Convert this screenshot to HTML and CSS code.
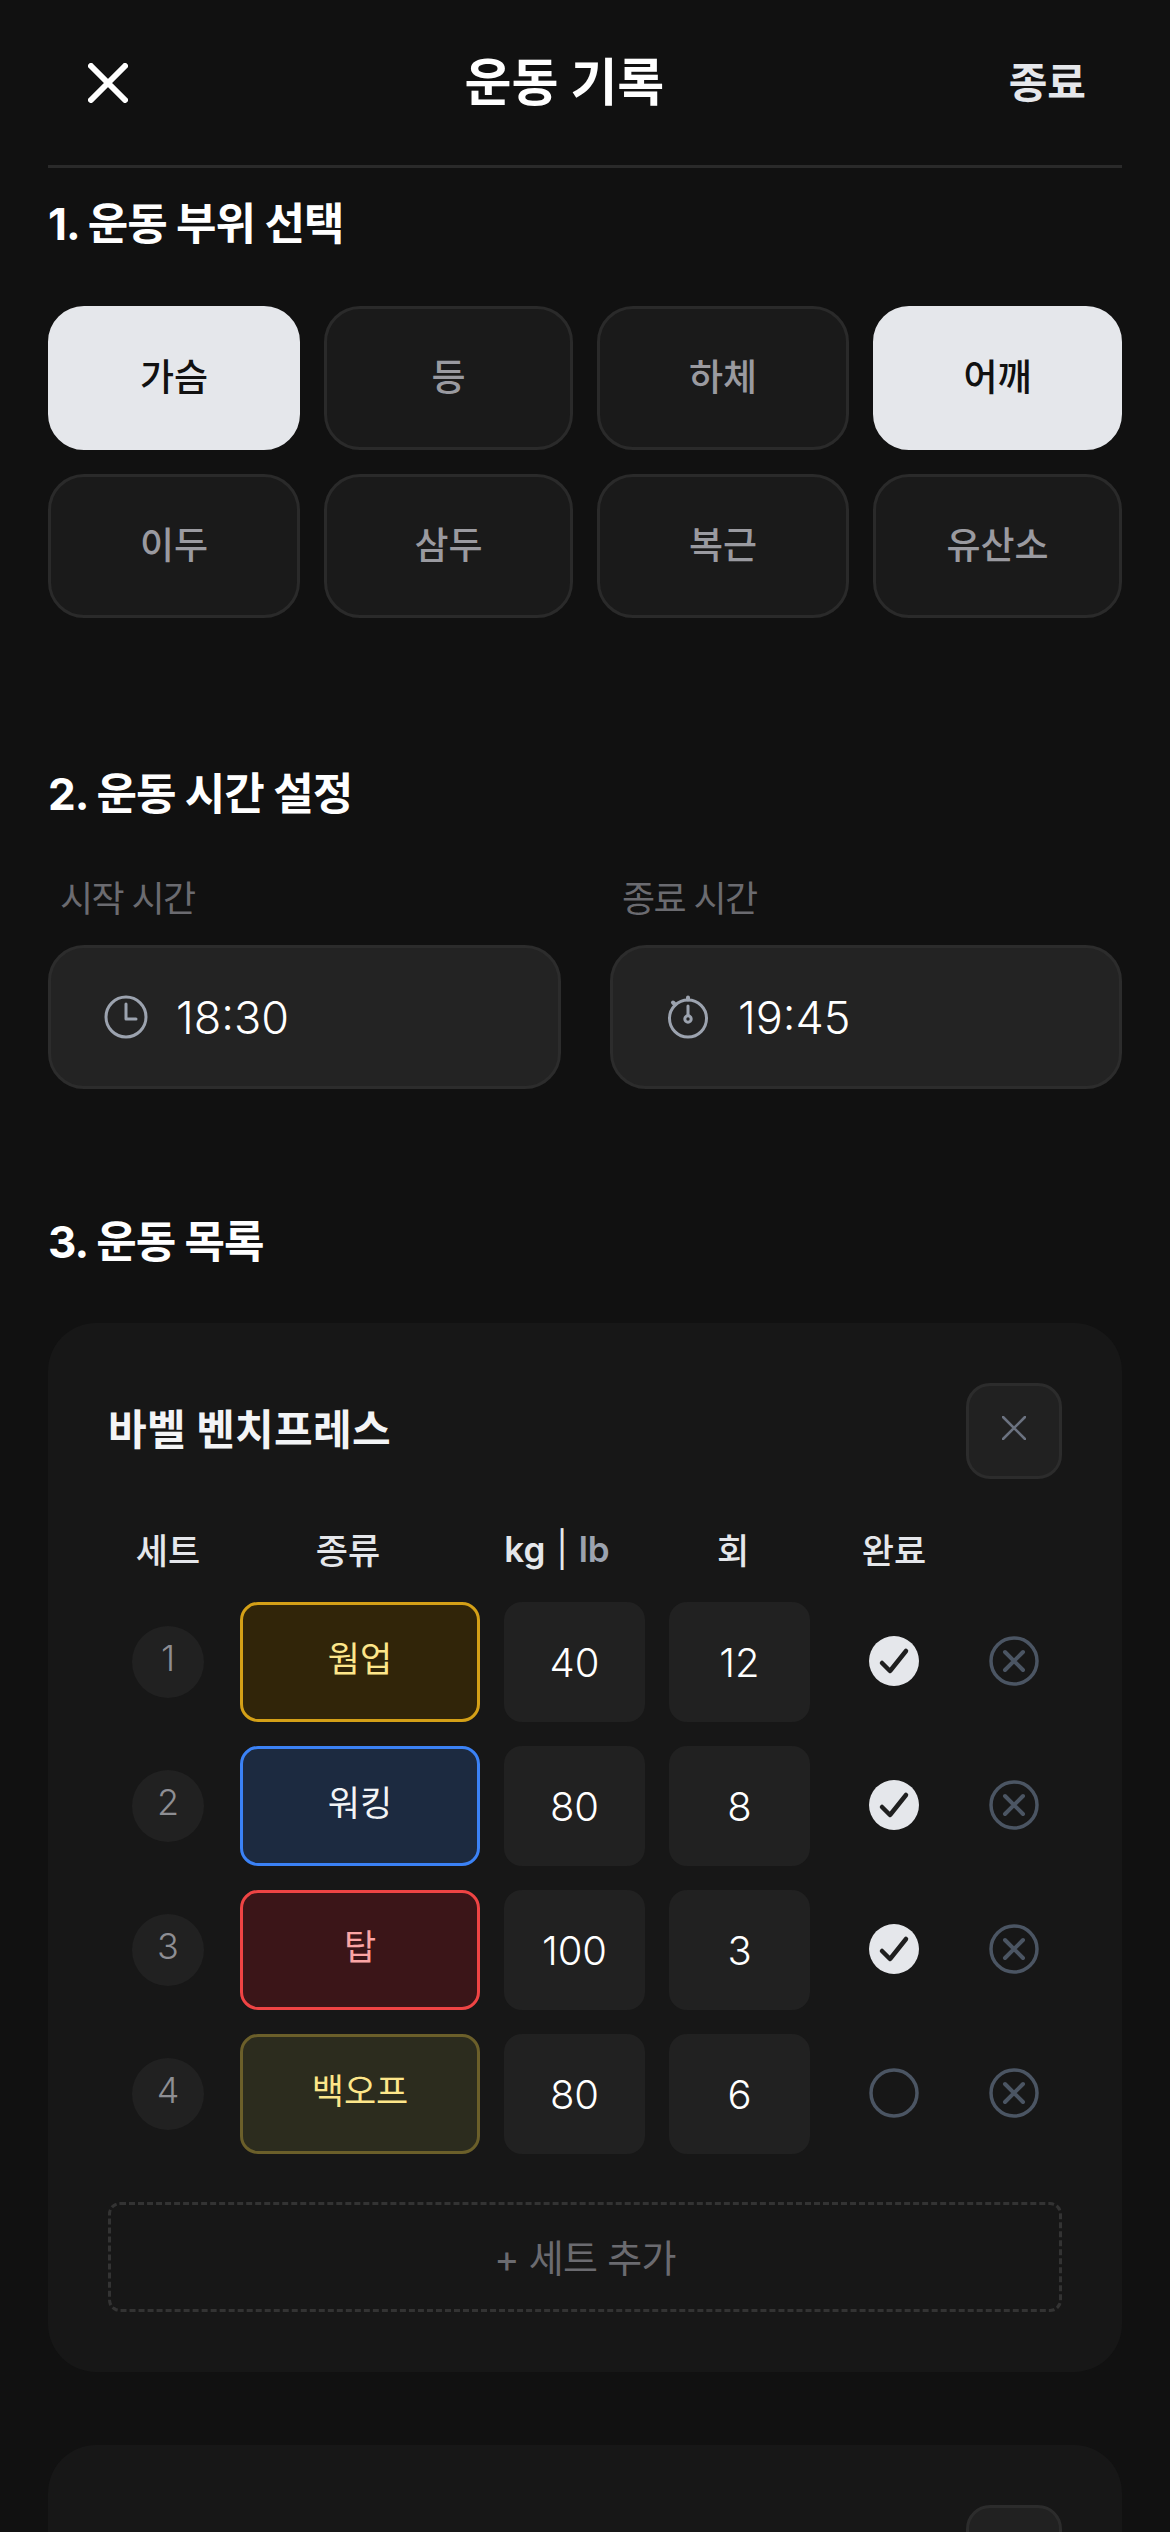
FILE: index.html
```html
<!DOCTYPE html>
<html lang="ko">
<head>
  <meta charset="utf-8">
  <title>운동 기록</title>
  <link rel="stylesheet" href="styles.css">
</head>
<body>
  <header class="topbar">
    <button class="close-btn" aria-label="닫기">
      <svg viewBox="0 0 40 40" width="40" height="40"><path d="M3 3L37 37M37 3L3 37" class="close-line"/></svg>
    </button>
    <h1>운동 기록</h1>
    <button class="finish-btn">종료</button>
  </header>

  <main>
    <h2 class="first">1. 운동 부위 선택</h2>
    <div class="chips">
      <div class="chip active">가슴</div>
      <div class="chip">등</div>
      <div class="chip">하체</div>
      <div class="chip active">어깨</div>
      <div class="chip">이두</div>
      <div class="chip">삼두</div>
      <div class="chip">복근</div>
      <div class="chip">유산소</div>
    </div>

    <h2 class="second">2. 운동 시간 설정</h2>
    <div class="times">
      <div class="time-col">
        <label>시작 시간</label>
        <div class="time-box">
          <svg class="time-icon" viewBox="0 0 48 48" width="48" height="48">
            <circle cx="24" cy="24" r="20"/>
            <path d="M24 11V26H34"/>
          </svg>
          <span>18:30</span>
        </div>
      </div>
      <div class="time-col">
        <label>종료 시간</label>
        <div class="time-box">
          <svg class="time-icon" viewBox="0 0 48 48" width="48" height="48">
            <circle cx="24" cy="25.5" r="18.5"/>
            <circle cx="24" cy="26" r="3.2"/>
            <path d="M24 13V22"/>
            <path class="knob" d="M24 4.5V6.5M9 9.5L11 11.5"/>
          </svg>
          <span>19:45</span>
        </div>
      </div>
    </div>

    <h2 class="third">3. 운동 목록</h2>
    <section class="card">
      <div class="card-head">
        <h3>바벨 벤치프레스</h3>
        <button class="remove-btn" aria-label="삭제">
          <svg viewBox="0 0 24 24" width="24" height="24"><path d="M1 1L23 23M23 1L1 23"/></svg>
        </button>
      </div>

      <div class="set-head">
        <span>세트</span>
        <span>종류</span>
        <span class="unit">kg <i>|</i> <b>lb</b></span>
        <span>회</span>
        <span>완료</span>
      </div>

      <div class="set-row">
        <div class="set-num">1</div>
        <div class="set-type warmup">웜업</div>
        <div class="set-val">40</div>
        <div class="set-val">12</div>
        <div class="icon-cell"><svg class="done" viewBox="0 0 50 50" width="50" height="50"><circle cx="25" cy="25" r="25"/><path d="M13 27L21 35L37 15"/></svg></div>
        <div class="icon-cell"><svg class="del" viewBox="0 0 50 50" width="50" height="50"><circle cx="25" cy="25" r="23"/><path d="M16 16L34 34M34 16L16 34"/></svg></div>
      </div>
      <div class="set-row">
        <div class="set-num">2</div>
        <div class="set-type walking">워킹</div>
        <div class="set-val">80</div>
        <div class="set-val">8</div>
        <div class="icon-cell"><svg class="done" viewBox="0 0 50 50" width="50" height="50"><circle cx="25" cy="25" r="25"/><path d="M13 27L21 35L37 15"/></svg></div>
        <div class="icon-cell"><svg class="del" viewBox="0 0 50 50" width="50" height="50"><circle cx="25" cy="25" r="23"/><path d="M16 16L34 34M34 16L16 34"/></svg></div>
      </div>
      <div class="set-row">
        <div class="set-num">3</div>
        <div class="set-type top">탑</div>
        <div class="set-val">100</div>
        <div class="set-val">3</div>
        <div class="icon-cell"><svg class="done" viewBox="0 0 50 50" width="50" height="50"><circle cx="25" cy="25" r="25"/><path d="M13 27L21 35L37 15"/></svg></div>
        <div class="icon-cell"><svg class="del" viewBox="0 0 50 50" width="50" height="50"><circle cx="25" cy="25" r="23"/><path d="M16 16L34 34M34 16L16 34"/></svg></div>
      </div>
      <div class="set-row">
        <div class="set-num">4</div>
        <div class="set-type backoff">백오프</div>
        <div class="set-val">80</div>
        <div class="set-val">6</div>
        <div class="icon-cell"><svg class="undone" viewBox="0 0 50 50" width="50" height="50"><circle cx="25" cy="25" r="23"/></svg></div>
        <div class="icon-cell"><svg class="del" viewBox="0 0 50 50" width="50" height="50"><circle cx="25" cy="25" r="23"/><path d="M16 16L34 34M34 16L16 34"/></svg></div>
      </div>

      <button class="add-set">+ 세트 추가</button>
    </section>

    <section class="card next">
      <button class="remove-btn" aria-label="삭제"></button>
    </section>
  </main>
</body>
</html>
```

FILE: styles.css
```css
html, body {
  margin: 0;
  height: 2532px;
  overflow: hidden;
  background-color: #111111;
}
body {
  font-family: Inter, "Noto Sans CJK KR", sans-serif;
  color: #ffffff;
}
button {
  font-family: inherit;
  background: none;
  border: none;
  padding: 0;
  color: inherit;
}

/* Top bar */
.topbar {
  display: flex;
  align-items: center;
  justify-content: space-between;
  height: 165px;
  margin: 0 48px;
  padding: 0 36px 0 40px;
  border-bottom: 3px solid #2a2a2a;
}
.topbar h1 {
  margin: 0 8px 0 0;
  font-size: 51px;
  font-weight: 700;
  line-height: 60px;
}
.close-btn {
  width: 40px;
  height: 40px;
}
.close-btn svg {
  display: block;
}
.close-line {
  fill: none;
  stroke: #ffffff;
  stroke-width: 6;
  stroke-linecap: round;
}
.finish-btn {
  font-size: 42px;
  font-weight: 700;
  line-height: 50px;
  color: #e5e7eb;
}

main {
  padding: 0 48px;
}
h2 {
  margin: 0 0 51px;
  font-size: 44px;
  font-weight: 700;
  line-height: 60px;
  letter-spacing: -1px;
}
h2.first {
  margin-top: 26px;
  margin-bottom: 52px;
}
h2.second {
  margin-top: 146px;
}
h2.third {
  margin-top: 123px;
}

/* Body part chips */
.chips {
  display: grid;
  grid-template-columns: 252px 249px 252px 249px;
  grid-auto-rows: 144px;
  gap: 24px;
}
.chip {
  display: flex;
  align-items: center;
  justify-content: center;
  box-sizing: border-box;
  padding-bottom: 6px;
  background-color: #1a1a1a;
  border: 3px solid #2a2a2a;
  border-radius: 36px;
  color: #9a9aa0;
  font-size: 37px;
  font-weight: 500;
}
.chip.active {
  background-color: #e5e7eb;
  border-color: #e5e7eb;
  color: #111111;
}

/* Time */
.times {
  display: grid;
  grid-template-columns: 513px 512px;
  column-gap: 49px;
}
.time-col label {
  display: block;
  height: 48px;
  margin-bottom: 22px;
  padding-left: 12px;
  font-size: 36px;
  line-height: 48px;
  letter-spacing: -1.6px;
  color: #6b6b70;
}
.time-box {
  display: flex;
  align-items: center;
  gap: 26px;
  box-sizing: border-box;
  height: 144px;
  padding-left: 51px;
  background-color: #232323;
  border: 3px solid #2c2c2c;
  border-radius: 36px;
  font-size: 45px;
  font-weight: 300;
}
.time-icon {
  fill: none;
  stroke: #9ca3af;
  stroke-width: 3;
  stroke-linecap: round;
  stroke-linejoin: round;
}
.time-icon .knob {
  stroke-width: 4;
}

/* Exercise card */
.card {
  box-sizing: border-box;
  padding: 60px;
  background-color: #171717;
  border-radius: 48px;
}
.card.next {
  display: flex;
  justify-content: flex-end;
  height: 87px;
  margin-top: 73px;
  overflow: hidden;
  border-radius: 48px 48px 0 0;
}
.card.next .remove-btn {
  flex-shrink: 0;
}
.card-head {
  display: flex;
  align-items: center;
  justify-content: space-between;
  height: 96px;
}
.card-head h3 {
  margin: 0 0 9px;
  font-size: 42px;
  font-weight: 700;
  letter-spacing: 0.3px;
  color: #f3f4f6;
}
.remove-btn {
  display: flex;
  align-items: center;
  justify-content: center;
  box-sizing: border-box;
  width: 96px;
  height: 96px;
  padding-bottom: 6px;
  background-color: #212121;
  border: 3px solid #2c2c2c;
  border-radius: 24px;
}
.remove-btn path {
  fill: none;
  stroke: #6b7280;
  stroke-width: 2.6;
  stroke-linecap: round;
}

/* Sets table */
.set-head {
  display: grid;
  grid-template-columns: 120px 240px 178px 174px 148px;
  align-items: center;
  height: 42px;
  margin: 44px 0 37px;
  font-size: 35px;
  font-weight: 500;
  color: #e5e7eb;
  text-align: center;
}
.set-head .unit {
  font-weight: 600;
  word-spacing: 2px;
}
.set-head i {
  font-style: normal;
  font-weight: 400;
}
.set-head b {
  color: #9ca3af;
  font-weight: 600;
}
.set-row {
  display: grid;
  grid-template-columns: 96px 240px 141px 141px 120px 72px;
  column-gap: 24px;
  align-items: center;
  height: 120px;
  margin-bottom: 24px;
  padding-left: 12px;
}
.set-num {
  box-sizing: border-box;
  width: 72px;
  height: 72px;
  justify-self: center;
  padding-bottom: 8px;
  display: flex;
  align-items: center;
  justify-content: center;
  background-color: #212121;
  border-radius: 50%;
  font-size: 36px;
  font-weight: 300;
  color: #8e8e93;
}
.set-type {
  display: flex;
  align-items: center;
  justify-content: center;
  box-sizing: border-box;
  height: 120px;
  padding-bottom: 12px;
  border: 3px solid;
  border-radius: 18px;
  font-size: 35px;
}
.warmup {
  background-color: #312509;
  border-color: #d4a017;
  color: #fde68a;
}
.walking {
  background-color: #1c2a40;
  border-color: #3b82f6;
  color: #f3f4f6;
}
.top {
  background-color: #3b1518;
  border-color: #ef4444;
  color: #fca5a5;
}
.backoff {
  background-color: #2c2c1e;
  border-color: #6b5f2a;
  color: #fde68a;
}
.set-val {
  display: flex;
  align-items: center;
  justify-content: center;
  height: 120px;
  background-color: #212121;
  border-radius: 18px;
  font-size: 40px;
  font-weight: 300;
  color: #ffffff;
}
.icon-cell {
  display: flex;
  justify-content: center;
  margin-bottom: 3px;
}
.done circle {
  fill: #e5e7eb;
}
.done path {
  fill: none;
  stroke: #1f1f1f;
  stroke-width: 4.5;
  stroke-linecap: round;
  stroke-linejoin: round;
}
.undone circle,
.del circle {
  fill: none;
  stroke: #4b5563;
  stroke-width: 3.5;
}
.del path {
  fill: none;
  stroke: #4b5563;
  stroke-width: 4;
  stroke-linecap: round;
}
.add-set {
  display: block;
  box-sizing: border-box;
  width: 100%;
  height: 110px;
  margin-top: 48px;
  padding-bottom: 4px;
  border: 3px dashed #333333;
  border-radius: 12px;
  font-size: 38px;
  letter-spacing: -0.7px;
  color: #6b6b70;
}
```
